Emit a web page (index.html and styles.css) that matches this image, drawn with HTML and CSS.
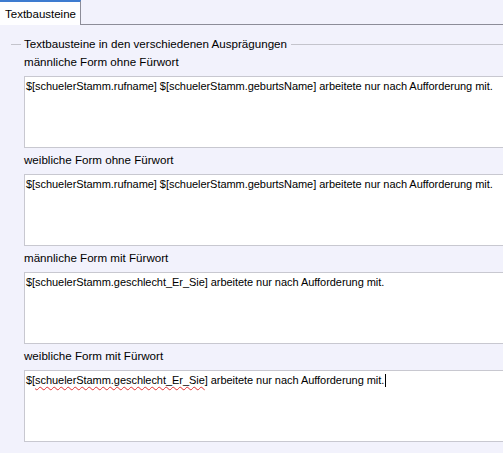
FILE: index.html
```html
<!DOCTYPE html>
<html lang="de">
<head>
<meta charset="utf-8">
<title>Textbausteine</title>
<link rel="stylesheet" href="styles.css">
</head>
<body>
<div class="tabstrip">
  <div class="tab">Textbausteine</div>
  <div class="tabrest"></div>
</div>
<div class="panel">
  <div class="legend">
    <span class="lline lshort"></span>
    <span class="ltext">Textbausteine in den verschiedenen Ausprägungen</span>
    <span class="lline lgrow"></span>
  </div>
  <div class="section">
    <div class="label">männliche Form ohne Fürwort</div>
    <div class="area">$[schuelerStamm.rufname] $[schuelerStamm.geburtsName] arbeitete nur nach Aufforderung mit.</div>
  </div>
  <div class="section">
    <div class="label">weibliche Form ohne Fürwort</div>
    <div class="area">$[schuelerStamm.rufname] $[schuelerStamm.geburtsName] arbeitete nur nach Aufforderung mit.</div>
  </div>
  <div class="section">
    <div class="label">männliche Form mit Fürwort</div>
    <div class="area">$[schuelerStamm.geschlecht_Er_Sie] arbeitete nur nach Aufforderung mit.</div>
  </div>
  <div class="section">
    <div class="label">weibliche Form mit Fürwort</div>
    <div class="area">$[<span class="spell">schuelerStamm.geschlecht_Er_Sie</span>] arbeitete nur nach Aufforderung mit.<span class="caret"></span></div>
  </div>
</div>
</body>
</html>
```
FILE: styles.css
```css
html, body {
  margin: 0;
  padding: 0;
  width: 503px;
  height: 453px;
  overflow: hidden;
  background: #f2f2fc;
  font-family: "Liberation Sans", Arial, sans-serif;
  font-size: 11px;
  color: #000;
}
.tabstrip {
  display: flex;
  height: 25px;
  align-items: stretch;
}
.tab {
  width: 81px;
  box-sizing: border-box;
  border-top: 2px solid #3d7bd0;
  border-right: 1px solid #8d8d98;
  background: #fefeff;
  padding: 5px 0 0 5px;
  line-height: 14px;
  font-size: 11.5px;
}
.tabrest {
  flex: 1;
  border-bottom: 1px solid #8d8d98;
}
.panel {
  padding: 12px 0 0 11px;
}
.legend {
  display: flex;
  align-items: center;
  height: 14px;
  line-height: 14px;
  font-size: 11.6px;
}
.lline {
  height: 1px;
  background: #c4c4cc;
}
.lshort {
  width: 10px;
  margin-right: 3px;
}
.lgrow {
  flex: 1;
  margin-left: 4px;
}
.section {
  padding-left: 13px;
  margin-top: 2px;
}
.section + .section {
  margin-top: 3px;
}
.label {
  height: 18px;
  line-height: 18px;
  margin-bottom: 5px;
  font-size: 11.6px;
}
.area {
  height: 72px;
  width: 520px;
  box-sizing: border-box;
  border: 1px solid #c8c8d0;
  background: #fff;
  padding: 2px 0 0 1px;
  line-height: 14px;
  white-space: nowrap;
  letter-spacing: -0.05px;
}
.spell {
  text-decoration: underline wavy #e03030;
  text-decoration-thickness: 1px;
  text-underline-offset: 2px;
}
.caret {
  display: inline-block;
  width: 1px;
  height: 13px;
  background: #000;
  vertical-align: -3px;
  margin-left: 1px;
}
```
